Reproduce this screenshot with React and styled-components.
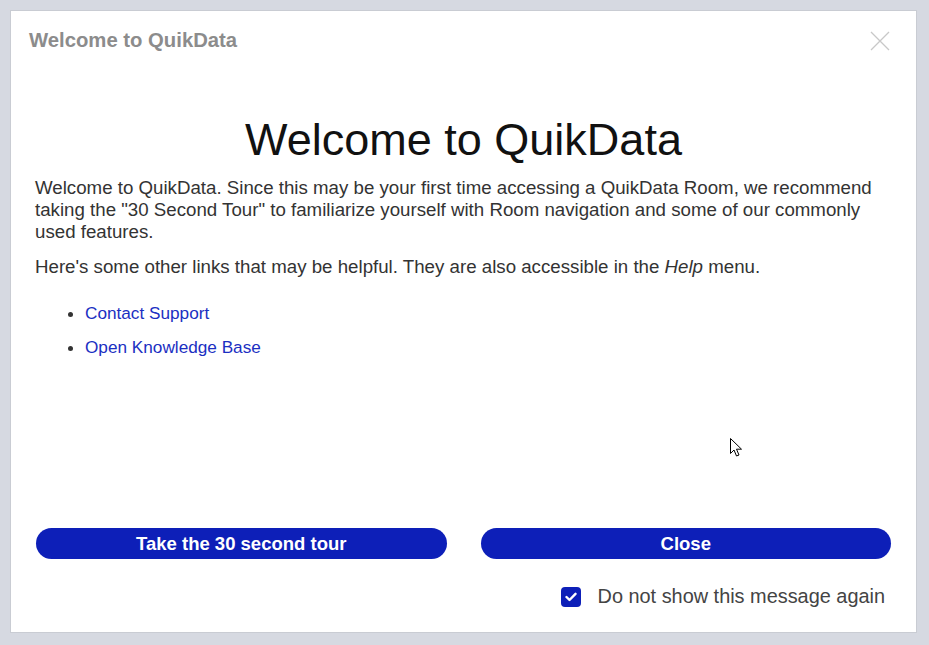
import React, { useState } from 'react'
import styled, { createGlobalStyle } from 'styled-components'

const GlobalStyle = createGlobalStyle`
    html, body {
        margin: 0;
        padding: 0;
        background: #d6d9e1;
        font-family: "Liberation Sans", Arial, sans-serif;
    }
`

const Page = styled.div`
    width: 929px;
    height: 645px;
    padding: 10px 12px 12px 10px;
    box-sizing: border-box;
`

const Dialog = styled.div`
    position: relative;
    height: 100%;
    background: #fff;
    border: 1px solid #c9ccd3;
    box-sizing: border-box;
    display: flex;
    flex-direction: column;
`

const Header = styled.div`
    display: flex;
    align-items: center;
    justify-content: space-between;
    height: 58px;
    padding: 0 26px 0 18px;
    h3 {
        margin: 0;
        font-size: 20.3px;
        font-weight: bold;
        color: #8c8c8c;
    }
`

const CloseBtn = styled.button`
    border: none;
    background: none;
    padding: 0;
    width: 20px;
    height: 20px;
    cursor: pointer;
    margin-top: 2px;
`

const Body = styled.div`
    flex: 1;
    padding: 0 24px;
    display: flex;
    flex-direction: column;
    color: #333;
    h1 {
        margin: 44px 0 10px;
        text-align: center;
        font-size: 45px;
        font-weight: normal;
        color: #111;
        line-height: 1.2;
    }
    p {
        max-width: 850px;
        margin: 0 0 13px;
        font-size: 18.7px;
        line-height: 22px;
    }
`

const Links = styled.ul`
    margin: 11px 0 0;
    padding-left: 50px;
    li {
        font-size: 17.2px;
        line-height: 22px;
        margin-bottom: 12px;
    }
    a {
        color: #1b2fc2;
        text-decoration: none;
    }
`

const Footer = styled.div`
    padding: 0 25px 24px;
    display: flex;
    flex-direction: column;
    gap: 26px;
`

const Buttons = styled.div`
    display: grid;
    grid-template-columns: 1fr 1fr;
    gap: 34px;
`

const Button = styled.button`
    height: 31px;
    border: none;
    border-radius: 16px;
    background: #0d1fb8;
    color: #fff;
    font-family: inherit;
    font-size: 18.5px;
    font-weight: bold;
    cursor: pointer;
`

const CheckRow = styled.label`
    display: flex;
    align-items: center;
    justify-content: flex-end;
    gap: 17px;
    padding-right: 6px;
    font-size: 19.9px;
    color: #444;
    cursor: pointer;
`

const Box = styled.span`
    width: 20px;
    height: 20px;
    border-radius: 4px;
    background: ${p => p.checked ? '#0d1fb8' : '#fff'};
    border: ${p => p.checked ? 'none' : '1px solid #999'};
    display: flex;
    align-items: center;
    justify-content: center;
`

const Cursor = styled.svg`
    position: absolute;
    left: 719px;
    top: 427px;
`

const App = () => {
    const [checked, setChecked] = useState(true)

    return (
        <Page>
            <GlobalStyle />
            <Dialog>
                <Header>
                    <h3>Welcome to QuikData</h3>
                    <CloseBtn aria-label='Close'>
                        <svg width="20" height="20" viewBox="0 0 20 20">
                            <path d="M1 1 L19 19 M19 1 L1 19" stroke="#c8c8c8" strokeWidth="1.3" />
                        </svg>
                    </CloseBtn>
                </Header>
                <Body>
                    <h1>Welcome to QuikData</h1>
                    <p>Welcome to QuikData. Since this may be your first time accessing a QuikData Room, we recommend taking the "30 Second Tour" to familiarize yourself with Room navigation and some of our commonly used features.</p>
                    <p>Here's some other links that may be helpful. They are also accessible in the <i>Help</i> menu.</p>
                    <Links>
                        <li><a href="#">Contact Support</a></li>
                        <li><a href="#">Open Knowledge Base</a></li>
                    </Links>
                </Body>
                <Footer>
                    <Buttons>
                        <Button>Take the 30 second tour</Button>
                        <Button>Close</Button>
                    </Buttons>
                    <CheckRow onClick={() => setChecked(!checked)}>
                        <Box checked={checked}>
                            {checked && (
                                <svg width="12" height="10" viewBox="0 0 12 10">
                                    <path d="M1.5 5 L4.5 8 L10.5 1.8" stroke="#fff" strokeWidth="2.4" fill="none" strokeLinecap="round" strokeLinejoin="round" />
                                </svg>
                            )}
                        </Box>
                        Do not show this message again
                    </CheckRow>
                </Footer>
                <Cursor width="13" height="20" viewBox="0 0 13 20">
                    <path d="M0.5 0.5 L0.5 15.5 L4 12 L6.5 18 L9 17 L6.5 11.2 L11.5 11.2 Z" fill="#fff" stroke="#000" strokeWidth="1" />
                </Cursor>
            </Dialog>
        </Page>
    )
}

export default App
